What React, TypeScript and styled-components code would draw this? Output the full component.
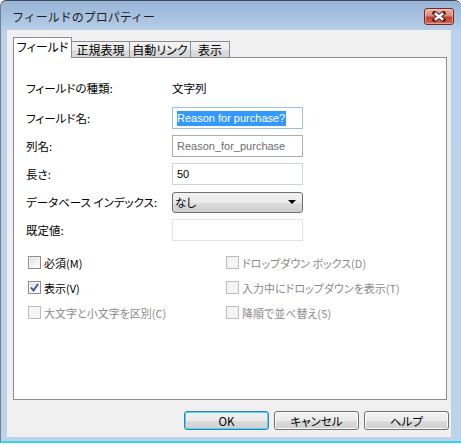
import React from "react";
import styled, { createGlobalStyle } from "styled-components";

const GlobalStyle = createGlobalStyle`
  html, body {
    margin: 0;
    padding: 0;
    width: 461px;
    height: 445px;
    overflow: hidden;
    background: #ffffff;
  }
  body {
    font-family: "Noto Sans CJK JP", "Liberation Sans", sans-serif;
    font-size: 11px;
    font-feature-settings: "palt";
  }
`;

const Frame = styled.div`
  width: 461px;
  height: 443px;
  box-sizing: border-box;
  border-top: 1px solid #3e4858;
  border-left: 1px solid #6f7f94;
  border-radius: 6px 6px 0 0;
  border-bottom: 2px solid #35d4f0;
  background: linear-gradient(to bottom, #98b4d6 0px, #aec7e3 22px, #bcd3eb 32px, #bdd3ea 100%);
  display: flex;
  flex-direction: column;
  padding: 0 10px 4px 6px;
`;

const TitleBar = styled.div`
  height: 29px;
  display: flex;
  align-items: center;
  justify-content: space-between;
  padding-left: 5px;
`;

const Title = styled.span`
  color: #1e1e1e;
  font-size: 12px;
  font-feature-settings: normal;
  margin-top: 2px;
`;

const CloseButton = styled.div`
  width: 30px;
  height: 17px;
  margin-right: -3px;
  margin-top: 1px;
  box-sizing: border-box;
  border: 1px solid #6e2a2a;
  border-radius: 3px;
  background: linear-gradient(to bottom, #eab4a6 0%, #d88a77 45%, #c3412f 55%, #d46a55 100%);
  display: flex;
  align-items: center;
  justify-content: center;
  box-shadow: inset 0 0 0 1px rgba(255, 220, 210, 0.5);
`;

const Client = styled.div`
  flex: 1;
  background: #f0f0f0;
  display: flex;
  flex-direction: column;
  padding: 7px 4px 0 6px;
`;

const TabStrip = styled.div`
  display: flex;
  align-items: flex-end;
  height: 21px;
  margin-bottom: -1px;
  position: relative;
  z-index: 1;
`;

const Tab = styled.div<{ $active?: boolean; $w: number }>`
  box-sizing: border-box;
  width: ${p => p.$w}px;
  height: ${p => (p.$active ? 21 : 17)}px;
  border: 1px solid #898c95;
  border-bottom: ${p => (p.$active ? "none" : "1px solid #898c95")};
  margin-left: ${p => (p.$active ? 0 : -1)}px;
  background: ${p => (p.$active ? "#ffffff" : "linear-gradient(to bottom, #f3f3f3 0%, #ebebeb 50%, #dddddd 51%, #d6d6d6 100%)")};
  color: #000;
  font-size: 12px;
  line-height: ${p => (p.$active ? 18 : 15)}px;
  text-align: center;
  &:first-child { margin-left: 0; }
`;

const Panel = styled.div`
  width: 434px;
  height: 343px;
  box-sizing: border-box;
  border: 1px solid #898c95;
  background: #ffffff;
  padding: 19px 12px 0 12px;
  display: flex;
  flex-direction: column;
`;

const FormRows = styled.div`
  display: flex;
  flex-direction: column;
  gap: 6px;
`;

const Row = styled.div<{ $gapAfter?: number }>`
  display: grid;
  grid-template-columns: 146px 131px;
  align-items: center;
  height: 22px;
  margin-bottom: ${p => p.$gapAfter ?? 0}px;
`;

const Label = styled.span`
  color: #000;
  font-size: 11.5px;
`;

const TextBox = styled.div<{ $border: string; $color?: string }>`
  box-sizing: border-box;
  height: 22px;
  border: 1px solid ${p => p.$border};
  background: #fff;
  padding: 0 4px;
  display: flex;
  align-items: center;
  font-family: "Liberation Sans", "Noto Sans", sans-serif;
  font-size: 11px;
  color: ${p => p.$color ?? "#000"};
  white-space: nowrap;
`;

const Selected = styled.span`
  background: #3399ff;
  color: #fff;
  padding: 1px 1px 2px 0;
`;

const Select = styled.div`
  box-sizing: border-box;
  height: 21px;
  border: 1px solid #707070;
  border-radius: 3px;
  background: linear-gradient(to bottom, #f2f2f2 0%, #ebebeb 50%, #dddddd 51%, #cfcfcf 100%);
  display: flex;
  align-items: center;
  justify-content: space-between;
  padding: 0 6px 0 2px;
  font-size: 11.5px;
  color: #000;
`;

const Arrow = styled.span`
  width: 0;
  height: 0;
  border-left: 4px solid transparent;
  border-right: 4px solid transparent;
  border-top: 4px solid #000;
`;

const CheckGrid = styled.div`
  display: grid;
  grid-template-columns: 198px 1fr;
  row-gap: 8px;
  margin-top: 13px;
  padding-left: 2px;
`;

const CheckItem = styled.label<{ $disabled?: boolean }>`
  display: flex;
  align-items: center;
  height: 17px;
  gap: 3px;
  font-size: 11px;
  color: ${p => (p.$disabled ? "#8a8a8a" : "#000")};
`;

const Box = styled.span<{ $disabled?: boolean }>`
  box-sizing: border-box;
  width: 13px;
  height: 13px;
  border: 1px solid ${p => (p.$disabled ? "#bcbcbc" : "#8e8f8f")};
  background: ${p =>
    p.$disabled
      ? "#f4f4f4"
      : "linear-gradient(135deg, #dcdcdc 0%, #f4f4f4 60%, #ffffff 100%)"};
  box-shadow: inset 0 0 0 1px #f4f4f4;
  display: flex;
  align-items: center;
  justify-content: center;
`;

const ButtonRow = styled.div`
  display: flex;
  justify-content: flex-end;
  gap: 5px;
  margin-top: 11px;
  margin-right: -2px;
`;

const Button = styled.div<{ $default?: boolean }>`
  box-sizing: border-box;
  width: 85px;
  height: 19px;
  border: 1px solid ${p => (p.$default ? "#3c7fb1" : "#707070")};
  border-radius: 3px;
  background: linear-gradient(to bottom, #f2f2f2 0%, #ebebeb 50%, #dddddd 51%, #cfcfcf 100%);
  box-shadow: inset 0 0 0 1px ${p => (p.$default ? "#48d8fb" : "#fcfcfc")};
  display: flex;
  align-items: center;
  justify-content: center;
  font-size: 11.5px;
  color: #000;
`;

function CheckBox({ label, checked, disabled }: { label: string; checked?: boolean; disabled?: boolean }) {
  return (
    <CheckItem $disabled={disabled}>
      <Box $disabled={disabled}>
        {checked && (
          <svg width="9" height="9" viewBox="0 0 9 9">
            <path d="M1 4.5 L3.5 7.5 L8 1" fill="none" stroke="#3b4f9a" strokeWidth="1.8" />
          </svg>
        )}
      </Box>
      {label}
    </CheckItem>
  );
}

export default function App() {
  return (
    <>
      <GlobalStyle />
      <Frame>
        <TitleBar>
          <Title>フィールドのプロパティー</Title>
          <CloseButton>
            <svg width="14" height="11" viewBox="0 0 14 11">
              <path d="M2.5 2 L11.5 9 M11.5 2 L2.5 9" stroke="#5a2020" strokeWidth="4.2" strokeLinecap="square" />
              <path d="M2.8 2.3 L11.2 8.7 M11.2 2.3 L2.8 8.7" stroke="#ffffff" strokeWidth="2.4" />
            </svg>
          </CloseButton>
        </TitleBar>
        <Client>
          <TabStrip>
            <Tab $active $w={59}>フィールド</Tab>
            <Tab $w={59}>正規表現</Tab>
            <Tab $w={62}>自動リンク</Tab>
            <Tab $w={40}>表示</Tab>
          </TabStrip>
          <Panel>
            <FormRows>
              <Row $gapAfter={2}>
                <Label>フィールドの種類:</Label>
                <Label>文字列</Label>
              </Row>
              <Row>
                <Label>フィールド名:</Label>
                <TextBox $border="#9cbfe4">
                  <Selected>Reason for purchase?</Selected>
                </TextBox>
              </Row>
              <Row>
                <Label>列名:</Label>
                <TextBox $border="#adadad" $color="#6d6d6d">Reason_for_purchase</TextBox>
              </Row>
              <Row>
                <Label>長さ:</Label>
                <TextBox $border="#cbd5df">50</TextBox>
              </Row>
              <Row>
                <Label>データベース インデックス:</Label>
                <Select>
                  なし
                  <Arrow />
                </Select>
              </Row>
              <Row>
                <Label>既定値:</Label>
                <TextBox $border="#dde3ea"></TextBox>
              </Row>
            </FormRows>
            <CheckGrid>
              <CheckBox label="必須(M)" />
              <CheckBox label="ドロップダウン ボックス(D)" disabled />
              <CheckBox label="表示(V)" checked />
              <CheckBox label="入力中にドロップダウンを表示(T)" disabled />
              <CheckBox label="大文字と小文字を区別(C)" disabled />
              <CheckBox label="降順で並べ替え(S)" disabled />
            </CheckGrid>
          </Panel>
          <ButtonRow>
            <Button $default>OK</Button>
            <Button>キャンセル</Button>
            <Button>ヘルプ</Button>
          </ButtonRow>
        </Client>
      </Frame>
    </>
  );
}
